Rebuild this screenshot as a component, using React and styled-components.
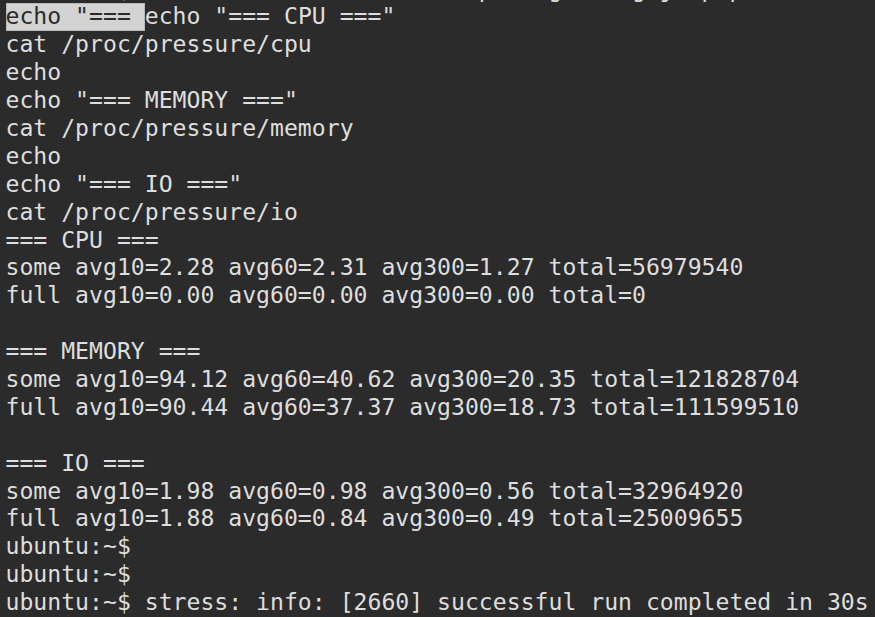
import React from 'react'
import styled, { createGlobalStyle } from 'styled-components';

const GlobalStyle = createGlobalStyle`
html, body {
  margin:0;
  padding:0;
  background:#2b2b2b;
}
`;

const Screen = styled.div`
width:100vw;
height:100vh;
overflow:hidden;
display:flex;
flex-direction:column;
justify-content:flex-end;
background:#2b2b2b;
padding-left:5.5px;
box-sizing:border-box;
`;

const Line = styled.div`
font-family:"DejaVu Sans Mono", "Liberation Mono", monospace;
font-size:23.14px;
line-height:27.9px;
height:27.9px;
color:#dedede;
white-space:pre;
flex-shrink:0;
`;

const Selection = styled.span`
display:inline-block;
vertical-align:top;
height:27.9px;
background:#d3d3d3;
color:#2b2b2b;
box-shadow: inset 0 0 0 1px #b8b8b8;
`;

const lines = [
  "ubuntu:~$ echo 'Resource check at post gate agajn pup done, ;",
  null,
  "cat /proc/pressure/cpu",
  "echo",
  'echo "=== MEMORY ==="',
  "cat /proc/pressure/memory",
  "echo",
  'echo "=== IO ==="',
  "cat /proc/pressure/io",
  "=== CPU ===",
  "some avg10=2.28 avg60=2.31 avg300=1.27 total=56979540",
  "full avg10=0.00 avg60=0.00 avg300=0.00 total=0",
  "",
  "=== MEMORY ===",
  "some avg10=94.12 avg60=40.62 avg300=20.35 total=121828704",
  "full avg10=90.44 avg60=37.37 avg300=18.73 total=111599510",
  "",
  "=== IO ===",
  "some avg10=1.98 avg60=0.98 avg300=0.56 total=32964920",
  "full avg10=1.88 avg60=0.84 avg300=0.49 total=25009655",
  "ubuntu:~$",
  "ubuntu:~$",
  "ubuntu:~$ stress: info: [2660] successful run completed in 30s",
];

const App = () => {
  return <>
    <GlobalStyle />
    <Screen>
      {lines.map((text, i) => text === null ? (
        <Line key={i}><Selection>echo "=== </Selection>echo "=== CPU ==="</Line>
      ) : (
        <Line key={i}>{text || " "}</Line>
      ))}
    </Screen>
  </>
}

export default App
